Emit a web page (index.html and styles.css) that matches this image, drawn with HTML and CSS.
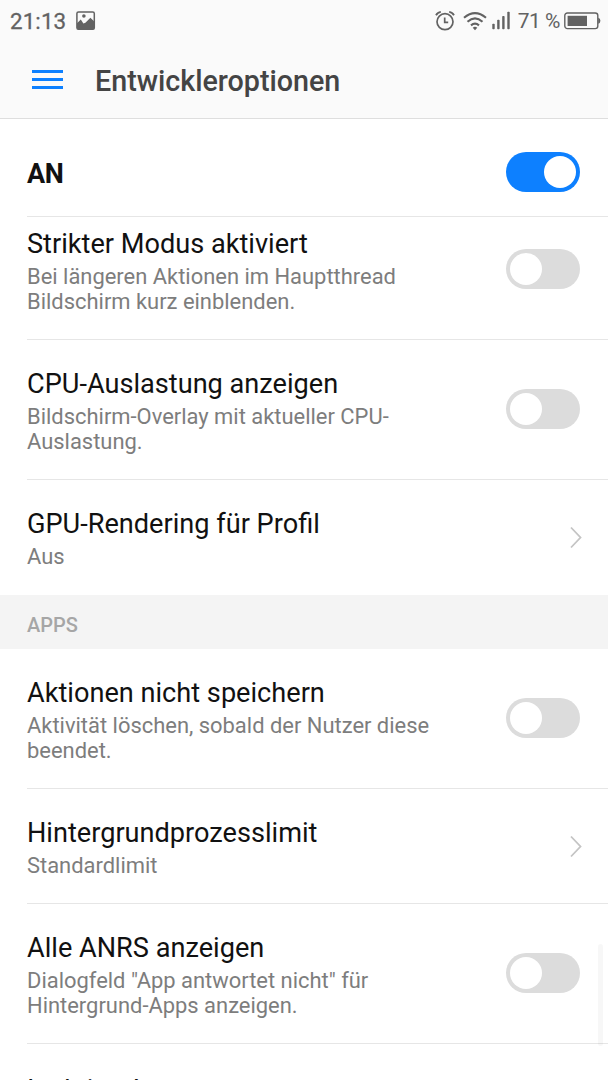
FILE: index.html
```
<!DOCTYPE html>
<html lang="de">
<head>
    <meta charset="UTF-8">
    <title>Entwickleroptionen</title>
    <link rel="stylesheet" href="styles.css">
</head>
<body>
    <div class="screen">
        <header>
            <div class="statusbar">
                <span class="time">21:13</span>
                <svg class="picture" width="20" height="20" viewBox="0 0 20 20">
                    <rect x="0.9" y="0.9" width="17.4" height="17.4" rx="1.6" fill="none" stroke="#626262" stroke-width="1.5"/>
                    <path d="M1 12.2 L4.8 8.6 L7.4 12.6 L9.4 11.8 L14.4 6.8 L18.5 10.8 V17 Q18.5 18.5 17 18.5 H2.5 Q1 18.5 1 17 Z" fill="#626262"/>
                    <circle cx="7.9" cy="5" r="1.8" fill="#626262"/>
                </svg>
                <span class="spacer"></span>
                <svg class="alarm" width="20" height="20" viewBox="0 0 20 20" fill="none" stroke="#626262">
                    <circle cx="10" cy="10.7" r="8" stroke-width="1.7"/>
                    <path d="M9.7 6.4 V11.3 H13.2" stroke-width="1.7"/>
                    <path d="M1 4.2 Q2.6 1.3 5.8 0.9 M14.2 0.9 Q17.4 1.3 19 4.2" stroke-width="1.8"/>
                </svg>
                <svg class="wifi" width="24" height="20" viewBox="0 0 24 20" fill="none" stroke="#626262" stroke-width="2.1">
                    <path d="M1 6.8 Q12 -2.6 23 6.8"/>
                    <path d="M4.5 10.7 Q12 4 19.5 10.7"/>
                    <path d="M8 14.4 Q12 10.8 16 14.4"/>
                    <path d="M9.7 16.7 Q12 14.8 14.3 16.7 L12 19.2 Z" fill="#626262" stroke="none"/>
                </svg>
                <svg class="signal" width="18" height="19" viewBox="0 0 18 19" fill="#626262">
                    <rect x="0.3" y="12.8" width="2.4" height="5.5" rx="0.8"/>
                    <rect x="5.2" y="8.8" width="2.4" height="9.5" rx="0.8"/>
                    <rect x="10.2" y="5" width="2.4" height="13.3" rx="0.8"/>
                    <rect x="15.3" y="0.8" width="2.4" height="17.5" rx="0.8"/>
                </svg>
                <span class="percent">71 %</span>
                <svg class="battery" width="37" height="18" viewBox="0 0 37 18">
                    <rect x="0.8" y="1" width="33" height="15.6" rx="2.6" fill="none" stroke="#626262" stroke-width="1.4"/>
                    <rect x="3.6" y="3.8" width="19.4" height="10.2" fill="#626262"/>
                    <path d="M34.2 5.8 Q36.4 6.2 36.4 8.8 Q36.4 11.4 34.2 11.8 Z" fill="#626262"/>
                </svg>
            </div>
            <div class="toolbar">
                <div class="menu"><i></i><i></i><i></i></div>
                <h1>Entwickleroptionen</h1>
            </div>
        </header>

        <div class="master">
            <b>AN</b>
            <div class="switch on"></div>
        </div>

        <main>
            <div class="list">
                <div class="row">
                    <div class="text">
                        <h2>Strikter Modus aktiviert</h2>
                        <p>Bei längeren Aktionen im Hauptthread<br>Bildschirm kurz einblenden.</p>
                    </div>
                    <div class="switch"></div>
                </div>
                <div class="row">
                    <div class="text">
                        <h2>CPU-Auslastung anzeigen</h2>
                        <p>Bildschirm-Overlay mit aktueller CPU-<br>Auslastung.</p>
                    </div>
                    <div class="switch"></div>
                </div>
                <div class="row last">
                    <div class="text">
                        <h2>GPU-Rendering für Profil</h2>
                        <p>Aus</p>
                    </div>
                    <svg class="arrow" width="14" height="24" viewBox="0 0 14 24"><path d="M2 2.5 L11.5 12.5 L2 22.5"/></svg>
                </div>
                <div class="section">APPS</div>
                <div class="row">
                    <div class="text">
                        <h2>Aktionen nicht speichern</h2>
                        <p>Aktivität löschen, sobald der Nutzer diese<br>beendet.</p>
                    </div>
                    <div class="switch"></div>
                </div>
                <div class="row">
                    <div class="text">
                        <h2>Hintergrundprozesslimit</h2>
                        <p>Standardlimit</p>
                    </div>
                    <svg class="arrow" width="14" height="24" viewBox="0 0 14 24"><path d="M2 2.5 L11.5 12.5 L2 22.5"/></svg>
                </div>
                <div class="row">
                    <div class="text">
                        <h2>Alle ANRS anzeigen</h2>
                        <p>Dialogfeld "App antwortet nicht" für<br>Hintergrund-Apps anzeigen.</p>
                    </div>
                    <div class="switch"></div>
                </div>
                <div class="row next">
                    <div class="text">
                        <h2>Inaktive Apps</h2>
                    </div>
                </div>
            </div>
            <div class="scrollbar"></div>
        </main>
    </div>
</body>
</html>
```
FILE: styles.css
```
* {
    box-sizing: border-box;
}
body {
    margin: 0;
    font-family: Roboto, sans-serif;
    background: #fff;
    color: #111;
}
h1, h2, p {
    margin: 0;
}
.screen {
    display: flex;
    flex-direction: column;
    height: 1080px;
    overflow: hidden;
}
header {
    height: 119px;
    background: #fafafa;
    border-bottom: 1px solid #dedede;
}
.statusbar {
    display: flex;
    align-items: center;
    height: 41px;
    padding: 0 7px 0 10px;
    color: #626262;
    font-size: 22px;
}
.time {
    padding-top: 1px;
    font-size: 22.4px;
    letter-spacing: 0.1px;
    -webkit-text-stroke: 0.3px #626262;
}
.picture {
    margin-left: 10px;
}
.spacer {
    flex: 1;
}
.wifi {
    margin-left: 8px;
}
.signal {
    margin-left: 5px;
}
.percent {
    margin-left: 8px;
    padding-top: 1px;
    font-size: 21px;
    letter-spacing: -0.5px;
}
.battery {
    margin-left: 4px;
}
.toolbar {
    display: flex;
    align-items: center;
    height: 77px;
    padding-left: 32px;
}
.menu {
    display: flex;
    flex-direction: column;
    gap: 5px;
    width: 31px;
    margin-right: 32px;
}
.menu i {
    height: 3px;
    background: #0d80ff;
}
h1 {
    padding-top: 2px;
    font-size: 28.7px;
    font-weight: 500;
    letter-spacing: -0.02px;
    color: #444;
}
.master {
    display: flex;
    align-items: center;
    justify-content: space-between;
    height: 98px;
    margin-left: 27px;
    padding: 9px 28px 0 0;
    border-bottom: 1px solid #e6e6e6;
    font-size: 27px;
    letter-spacing: -0.5px;
}
.master b {
    padding-top: 3px;
}
.switch {
    width: 74px;
    height: 40px;
    padding: 4px;
    border-radius: 20px;
    background: #dcdcdc;
}
.switch::before {
    content: "";
    display: block;
    width: 32px;
    height: 32px;
    border-radius: 50%;
    background: #fff;
}
.switch.on {
    background: #0d80ff;
}
.switch.on::before {
    margin-left: auto;
}
main {
    position: relative;
    flex: 1;
    overflow: hidden;
}
/* list is scrolled a little under the master switch */
.list {
    margin-top: -17px;
}
.row {
    display: flex;
    align-items: center;
    justify-content: space-between;
    margin-left: 27px;
    padding: 28px 28px 25px 0;
    border-bottom: 1px solid #e6e6e6;
}
.row.last {
    border-bottom: 0;
    padding-bottom: 26px;
}
.row.next {
    padding-top: 30px;
}
.row .switch {
    margin-bottom: 4px;
}
h2 {
    margin-bottom: 4px;
    font-size: 27.15px;
    font-weight: 400;
    line-height: 32px;
}
p {
    font-size: 21.93px;
    line-height: 25px;
    color: #7d7d7d;
}
.arrow {
    margin: 0 -3px 4px 0;
}
.arrow path {
    fill: none;
    stroke: #c4c4c4;
    stroke-width: 1.8;
}
.section {
    height: 54px;
    padding: 6px 27px 0;
    line-height: 49px;
    font-size: 20px;
    font-weight: 500;
    color: #a6a6a6;
    background: #f4f4f4;
}
.scrollbar {
    position: absolute;
    top: 727px;
    right: 5px;
    width: 5px;
    height: 102px;
    border-radius: 3px;
    background: rgba(0, 0, 0, 0.03);
}
```
